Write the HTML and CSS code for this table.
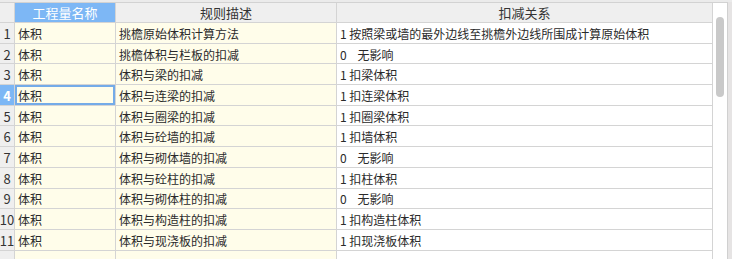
FILE: index.html
```html
<!DOCTYPE html>
<html lang="zh">
<head>
<meta charset="utf-8">
<link rel="stylesheet" href="styles.css">
</head>
<body>
<div class="frame">
  <div class="grid">
    <div class="row head">
      <div class="cell num"></div>
      <div class="cell hname">工程量名称</div>
      <div class="cell hcol">规则描述</div>
      <div class="cell hcol">扣减关系</div>
    </div>
    <div class="row"><div class="cell num">1</div><div class="cell name">体积</div><div class="cell desc">挑檐原始体积计算方法</div><div class="cell rel">1 按照梁或墙的最外边线至挑檐外边线所围成计算原始体积</div></div>
    <div class="row"><div class="cell num">2</div><div class="cell name">体积</div><div class="cell desc">挑檐体积与栏板的扣减</div><div class="cell rel">0    无影响</div></div>
    <div class="row"><div class="cell num">3</div><div class="cell name">体积</div><div class="cell desc">体积与梁的扣减</div><div class="cell rel">1 扣梁体积</div></div>
    <div class="row"><div class="cell num sel">4</div><div class="cell name cur">体积</div><div class="cell desc">体积与连梁的扣减</div><div class="cell rel">1 扣连梁体积</div></div>
    <div class="row"><div class="cell num">5</div><div class="cell name">体积</div><div class="cell desc">体积与圈梁的扣减</div><div class="cell rel">1 扣圈梁体积</div></div>
    <div class="row"><div class="cell num">6</div><div class="cell name">体积</div><div class="cell desc">体积与砼墙的扣减</div><div class="cell rel">1 扣墙体积</div></div>
    <div class="row"><div class="cell num">7</div><div class="cell name">体积</div><div class="cell desc">体积与砌体墙的扣减</div><div class="cell rel">0    无影响</div></div>
    <div class="row"><div class="cell num">8</div><div class="cell name">体积</div><div class="cell desc">体积与砼柱的扣减</div><div class="cell rel">1 扣柱体积</div></div>
    <div class="row"><div class="cell num">9</div><div class="cell name">体积</div><div class="cell desc">体积与砌体柱的扣减</div><div class="cell rel">0    无影响</div></div>
    <div class="row"><div class="cell num">10</div><div class="cell name">体积</div><div class="cell desc">体积与构造柱的扣减</div><div class="cell rel">1 扣构造柱体积</div></div>
    <div class="row"><div class="cell num">11</div><div class="cell name">体积</div><div class="cell desc">体积与现浇板的扣减</div><div class="cell rel">1 扣现浇板体积</div></div>
    <div class="row"><div class="cell num"></div><div class="cell name"></div><div class="cell desc"></div><div class="cell rel"></div></div>
  </div>
  <div class="scroll"><div class="thumb"></div></div>
  <div class="edge"></div>
</div>
</body>
</html>
```
FILE: styles.css
```css
html, body {
  margin: 0;
  padding: 0;
  background: #ebebeb;
  overflow: hidden;
}
body {
  width: 732px;
  height: 259px;
  font-family: "Noto Sans CJK SC", "Noto Sans", sans-serif;
  font-size: 12px;
  color: #2a2a2a;
}
.frame {
  display: flex;
  height: 259px;
  padding-top: 2px;
  box-sizing: border-box;
}
.grid {
  width: 713px;
  border-top: 1px solid #d2d2d2;
  background: #ffffff;
  overflow: hidden;
}
.row {
  display: grid;
  grid-template-columns: 15px 101px 221px 376px;
  height: 20.7px;
}
.row.head {
  height: 20px;
}
.cell {
  box-sizing: border-box;
  border-right: 1px solid #d4d4d4;
  border-bottom: 1px solid #d4d4d4;
  display: flex;
  align-items: center;
  white-space: pre;
  overflow: hidden;
  padding-left: 3px;
  padding-top: 1px;
}
.head .cell {
  background: #efefef;
  justify-content: center;
  font-size: 13px;
  padding-left: 0;
  padding-top: 0;
  color: #333;
}
.head .hname {
  background: #7db7f5;
  color: #ffffff;
}
.num {
  background: #efefef;
  justify-content: center;
  padding-left: 0;
  font-size: 13px;
  color: #333;
}
.num.sel {
  background: #7db7f5;
  color: #ffffff;
  font-weight: bold;
}
.name, .desc {
  background: #fffdea;
}
.name.cur {
  box-shadow: inset 0 0 0 2px #74abe8;
}
.rel {
  background: #ffffff;
}
.scroll {
  width: 14px;
  background: #ffffff;
  border-top: 1px solid #d2d2d2;
  border-right: 1px solid #d0d0d0;
  position: relative;
}
.thumb {
  position: absolute;
  left: 3px;
  top: 14px;
  width: 8px;
  height: 80px;
  border-radius: 4px;
  background: #c9c9c9;
}
.edge {
  flex: 1;
  background: #e6e4e4;
}
```
